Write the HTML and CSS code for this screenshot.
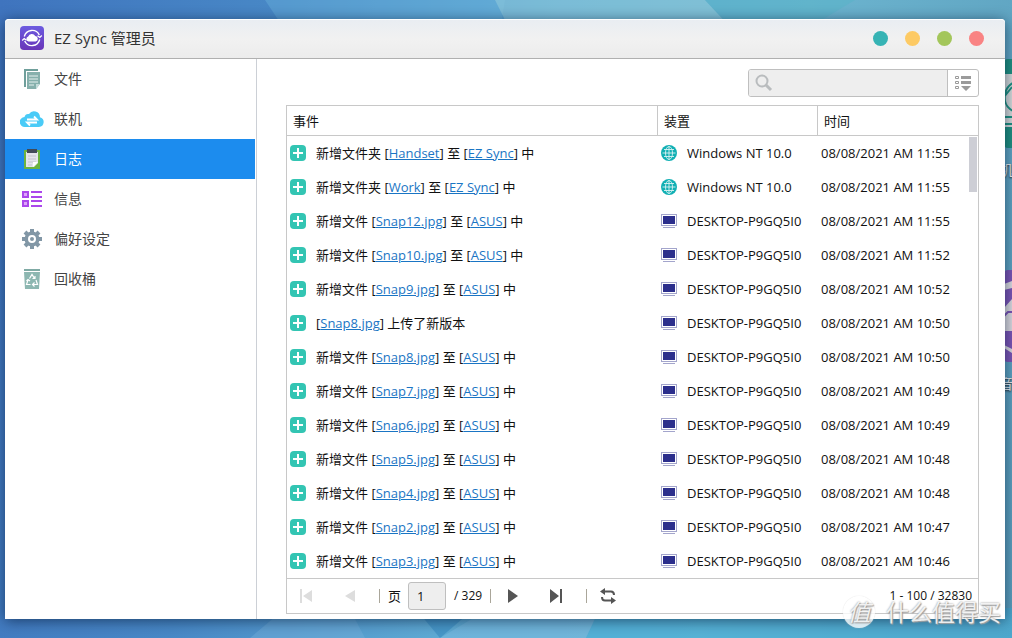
FILE: index.html
```html
<!DOCTYPE html>
<html lang="zh-CN">
<head>
<meta charset="utf-8">
<title>EZ Sync 管理员</title>
<link rel="stylesheet" href="styles.css">
</head>
<body>
<svg class="defs" aria-hidden="true">
  <symbol id="plus" viewBox="0 0 16 16"><rect width="16" height="16" rx="4" fill="#33c5b3"/><path d="M8 3v10M3 8h10" stroke="#fff" stroke-width="2"/></symbol>
  <symbol id="globe" viewBox="0 0 16 16"><circle cx="8" cy="8" r="8" fill="#12b0b4"/><g fill="none" stroke="#fff" stroke-width=".9" opacity=".85"><path d="M8 1.500v13M1.500 8h13M3 4.500h10M3 11.500h10"/><ellipse cx="8" cy="8" rx="3.500" ry="6.500"/></g></symbol>
  <symbol id="pc" viewBox="0 0 16 14"><rect x=".5" y=".5" width="15" height="11" fill="#fff" stroke="#a3a5cc"/><rect x="2" y="2" width="12" height="8" fill="#2c2f8c"/><path d="M2 13.500h12" stroke="#a3a5cc"/></symbol>
</svg>
<div class="desktop">
  <svg class="wallpaper" viewBox="0 0 1012 638" preserveAspectRatio="none" aria-hidden="true">
    <path d="M265 0h240l-5 30H285z" fill="#6cb4dc" opacity=".4"/>
    <path d="M495 0h210l28 30H510z" fill="#a5d6dd" opacity=".4"/>
    <path d="M705 0h150l-50 30h-72z" fill="#55b4c8" opacity=".5"/>
    <path d="M250 638l45-38h50l20 38z" fill="#77b1dc" opacity=".4"/>
    <path d="M415 608h60l-35 30z" fill="#2f84bb" opacity=".5"/>
    <path d="M440 638l50-30h110l-14 30z" fill="#7bbbe2" opacity=".5"/>
    <path d="M600 608h412v30H586z" fill="#3fb0dc" opacity=".5"/>
  </svg>
  <div class="shortcut shortcut-teal" aria-hidden="true">
    <svg class="tile" viewBox="0 0 88 89"><rect width="88" height="89" rx="4" fill="#1f9180"/><path d="M0 15h88v53H0z" fill="#d5dad9"/><path d="M14 22C-2 26-2 44 6 50s10 3 14 2M0 38l8-10M0 58h88M0 65h88" fill="none" stroke="#1f9180" stroke-width="2"/></svg>
    <span>机</span>
  </div>
  <div class="shortcut shortcut-purple" aria-hidden="true">
    <svg class="tile" viewBox="0 0 88 92"><rect width="88" height="92" rx="4" fill="#7c55b5"/><path d="M0 14l8-3v7l-8 2zM0 38l8-9v32H0zM0 75l8 4v4l-8-5z" fill="#dcdadf"/><path d="M0 46l4-4h4" fill="none" stroke="#7c55b5" stroke-width="2"/></svg>
    <span>音</span>
  </div>

  <main class="window">
    <header class="titlebar">
      <svg class="logo" viewBox="0 0 24 24" aria-hidden="true"><defs><linearGradient id="lg" x2="0" y2="1"><stop stop-color="#6b5be0"/><stop offset="1" stop-color="#6a35b8"/></linearGradient></defs><rect width="24" height="24" rx="4" fill="url(#lg)"/><g fill="none" stroke="#fff" stroke-width="1.400"><path d="M4.300 10.500a8 8 0 0 1 15-1.500M19.700 13.500a8 8 0 0 1-15 1.500"/><path d="M21.800 9.500l-2 2-2.300-1.800M2.200 14.500l2-2 2.300 1.800" stroke-width="1.200"/></g><path d="M8.500 15.500a2.500 2.500 0 0 1-.3-4.900 3.800 3.800 0 0 1 7-.6 2.800 2.800 0 0 1 .5 5.500z" fill="#fff"/></svg>
      <h1>EZ Sync 管理员</h1>
      <div class="controls">
        <button class="dot teal" aria-label="帮助"></button>
        <button class="dot amber" aria-label="最小化"></button>
        <button class="dot green" aria-label="最大化"></button>
        <button class="dot red" aria-label="关闭"></button>
      </div>
    </header>
    <div class="body">
      <nav class="sidebar">
        <a href="#files"><svg viewBox="0 0 24 24"><path d="M4 2h14v2H6v16H4z" fill="#6f9f9b"/><path d="M7 5h13v12l-4 5H7z" fill="#86b0ac"/><path d="M9 9h9M9 12h9M9 15h9M9 18h5" stroke="#e6f1ef"/><path d="M20 17l-4 5v-5z" fill="#c4dcd9"/></svg>文件</a>
        <a href="#connect"><svg viewBox="0 0 24 24"><path d="M5 20a5 5 0 0 1-.5-10A4 4 0 0 1 9 7a6 6 0 0 1 11 3.200A5 5 0 0 1 19 20z" fill="#4acbf7"/><path d="M7 12.500h10l-3-3M17 15.500H7l3 3" fill="none" stroke="#fff" stroke-width="1.800"/></svg>联机</a>
        <a href="#log" class="active" aria-current="page"><svg viewBox="0 0 24 24"><path d="M4 3h16v19H4z" fill="#6cb33f"/><path d="M6 5h12v11l-4 4H6z" fill="#e3e4ea"/><path d="M8 9h8M8 12h8M8 15h8M8 18h4" stroke="#c2c5cc"/><path d="M18 15l-5 5v-5z" fill="#fff"/><path d="M7 2h10v4H7z" fill="#414a57"/></svg>日志</a>
        <a href="#info"><svg viewBox="0 0 24 24"><g fill="#dca5f8" stroke="#ab47ec" stroke-width="2"><path d="M3 5h5v5H3zM3 14h5v5H3z"/></g><path d="M11 5h11M11 10h11M11 14h11M11 19h11" stroke="#ab47ec" stroke-width="2"/></svg>信息</a>
        <a href="#preferences"><svg viewBox="0 0 24 24"><g stroke="#8297a6" stroke-width="4"><path d="M12 2v20M2 12h20M5 5l14 14M19 5L5 19"/></g><circle cx="12" cy="12" r="7.500" fill="#8297a6"/><circle cx="12" cy="12" r="3" fill="#8297a6" stroke="#fff" stroke-width="2"/></svg>偏好设定</a>
        <a href="#recycle"><svg viewBox="0 0 24 24"><path d="M4 2h16v2H4z" fill="#7faaa4"/><path d="M4 5h16l-1 17H5z" fill="#8db7b1"/><path d="M9.500 11.500l2.500-4 2.500 4M16 13l1.500 4.500H13M10.500 17.500h-4L8 13M12.500 11.500h2.500v-2.500M14.500 15.500l-2 2 2 2M6.500 14l1.500-1.500 2 1.500" fill="none" stroke="#fff" stroke-width="1.200"/></svg>回收桶</a>
      </nav>
      <section class="content">
        <div class="search">
          <label for="q"><svg viewBox="0 0 18 18"><circle cx="7" cy="7" r="5.500" fill="none" stroke="#b9bcbe" stroke-width="2"/><path d="M11 11l5 5" stroke="#b9bcbe" stroke-width="3"/></svg></label>
          <input id="q" type="search" aria-label="搜索">
          <button aria-label="筛选"><svg viewBox="0 0 16 16"><path d="M.5 1.500h3v2h-3zM.5 6.500h3v2h-3zM.5 11.500h3v2h-3z" fill="none" stroke="#9b9b9b"/><path d="M6 1h10v3H6zM6 6h10v3H6zM6 11h10l-5 5z" fill="#9b9b9b"/></svg></button>
        </div>
        <div class="grid">
          <div class="scroll">
            <table>
              <colgroup><col><col class="c-device"><col class="c-time"></colgroup>
              <thead><tr><th scope="col">事件</th><th scope="col">装置</th><th scope="col">时间</th></tr></thead>
              <tbody id="rows"></tbody>
            </table>
            <div class="thumb"></div>
          </div>
          <footer class="pager">
            <button class="first" disabled aria-label="第一页"><svg viewBox="0 0 14 16"><path d="M1 1h2v14H1zM13 2v12L4 8z"/></svg></button>
            <button class="prev" disabled aria-label="上一页"><svg viewBox="0 0 14 16"><path d="M12 2v12L2 8z"/></svg></button>
            <span class="sep"></span>
            <label for="page">页</label>
            <input id="page" type="text" value="1">
            <span class="total">/ 329</span>
            <span class="sep"></span>
            <button class="next" aria-label="下一页"><svg viewBox="0 0 14 16"><path d="M2 1v14l10-7z"/></svg></button>
            <button class="last" aria-label="最后一页"><svg viewBox="0 0 14 16"><path d="M1 1v14l9-7zM11 1h2v14h-2z"/></svg></button>
            <span class="sep"></span>
            <button class="refresh" aria-label="刷新"><svg viewBox="0 0 16 16"><path d="M5 0v7L0 3.500zM11 9v7l5-3.500z"/><path d="M4 3.500h7q3 0 3 3.500M12 12.500H5q-3 0-3-3.500" fill="none" stroke="#555" stroke-width="2"/></svg></button>
            <span class="range">1 - 100 / 32830</span>
          </footer>
        </div>
      </section>
    </div>
  </main>
  <div class="watermark"><span class="seal">值</span><span>什么值得买</span></div>
</div>
<script src="app.js"></script>
</body>
</html>
```
FILE: styles.css
```css
* { box-sizing: border-box; }
body {
  margin: 0;
  font: 13px/18px "Open Sans", "Noto Sans CJK SC", sans-serif;
  color: #111;
}
h1 { margin: 0; font-size: 15px; font-weight: 400; color: #333; }
button, input { font: inherit; color: inherit; margin: 0; }
button { padding: 0; border: 0; background: none; }
svg { display: block; flex: none; }
.defs { position: absolute; width: 0; height: 0; }

.desktop {
  position: relative;
  min-height: 100vh;
  padding: 19px 7px 19px 5px;
  display: flex;
  overflow: hidden;
  background: linear-gradient(100deg, #3f74be 0%, #4888c6 25%, #5fabd4 50%, #6cb4cf 72%, #5b9fbd 100%);
}
.wallpaper { position: absolute; inset: 0; width: 100%; height: 100%; }
.shortcut { position: absolute; left: calc(100% - 8px); width: 88px; font-size: 14px; color: #e6eef2; text-shadow: 0 1px 2px #222; }
.shortcut-teal { top: 59px; }
.shortcut-purple { top: 270px; }
.shortcut span { display: block; margin-top: 13px; margin-left: -5px; }

.window {
  position: relative;
  flex: 1;
  display: flex;
  flex-direction: column;
  background: #fff;
  border-radius: 4px 4px 0 0;
  box-shadow: 0 2px 14px rgba(0, 20, 50, .6);
}
.titlebar {
  display: flex;
  align-items: center;
  height: 40px;
  padding: 0 21px 2px 15px;
  gap: 10px;
  border-top: 1px solid #fff;
  border-bottom: 1px solid #b0b0b0;
  border-radius: 4px 4px 0 0;
  background: linear-gradient(#e9edf2, #f1f1f1 50%, #ececec);
}
.logo { width: 24px; height: 24px; }
.controls { display: flex; gap: 17px; margin-left: auto; }
.dot { width: 15px; height: 15px; border-radius: 50%; }
.teal { background: #36b3b4; }
.amber { background: #fdca64; }
.green { background: #a3c65b; }
.red { background: #f98383; }

.body { flex: 1; display: flex; }
.sidebar { flex: none; width: 252px; padding-right: 1px; border-right: 1px solid #ccd0d6; }
.sidebar a {
  display: flex;
  align-items: center;
  gap: 10px;
  height: 40px;
  padding-left: 15px;
  font-size: 14px;
  color: #444;
  text-decoration: none;
}
.sidebar svg { width: 24px; height: 24px; }
.sidebar .active { background: #1c8cee; color: #fff; }

.content { flex: 1; min-width: 0; padding: 10px 26px 5px 29px; display: flex; flex-direction: column; gap: 8px; }
.search {
  display: flex;
  align-self: flex-end;
  width: 231px;
  height: 28px;
  border: 1px solid #bfbfbf;
  border-radius: 3px;
  overflow: hidden;
}
.search label { display: flex; align-items: center; padding-left: 6px; background: #eee; }
.search label svg { width: 18px; height: 18px; }
.search input { flex: 1; min-width: 0; border: 0; background: #eee; outline: 0; }
.search button { width: 31px; border-left: 1px solid #bfbfbf; display: grid; place-items: center; }
.search button svg { width: 16px; height: 16px; }

.grid { flex: 1; display: flex; flex-direction: column; border: 1px solid #c8c8c8; }
.scroll { position: relative; flex: 1; }
.thumb { position: absolute; top: 31px; right: 1px; width: 8px; height: 55px; background: #cdced5; }
table { width: 100%; table-layout: fixed; border-collapse: separate; border-spacing: 0; }
.c-device { width: 160px; }
.c-time { width: 161px; }
th { height: 30px; padding: 0 6px; font-weight: 400; text-align: left; border-bottom: 1px solid #c8c8c8; }
th + th { border-left: 1px solid #c8c8c8; }
td { height: 34px; padding: 0 4px; white-space: nowrap; }
td:first-child { padding-left: 3px; }
.cell { display: flex; align-items: center; gap: 10px; }
.cell svg { width: 16px; height: 16px; }
.cell .pc { height: 14px; }
td a { color: #1a75c4; text-decoration: underline; }

.pager { display: flex; align-items: center; height: 35px; padding: 0 6px 0 12px; border-top: 1px solid #c8c8c8; }
.pager button svg { width: 14px; height: 16px; fill: #555; }
.pager button:disabled svg { fill: #ddd; }
.pager .prev { margin-left: 30px; }
.pager .sep { width: 1px; height: 14px; background: #aaa69a; }
.prev + .sep { margin-left: 22px; }
.pager label { margin-left: 8px; }
.pager input { width: 38px; height: 28px; margin: 0 8px 0 7px; padding: 0 8px; border: 1px solid #bfbfbf; border-radius: 3px; background: #eee; }
.total, .range { font-size: 12px; }
.total + .sep { margin-left: 8px; }
.pager .next { margin-left: 15px; }
.pager .last { margin-left: 29px; }
.last + .sep { margin-left: 23px; }
.pager .refresh { margin-left: 13px; }
.pager .refresh svg { width: 16px; }
.range { margin-left: auto; }

.watermark {
  position: absolute;
  right: 11px;
  bottom: 10px;
  display: flex;
  align-items: center;
  gap: 11px;
  font-size: 23px;
  line-height: 24px;
  color: rgba(255, 255, 255, .85);
  text-shadow: 0 0 2px #888, 1px 1px 1px #aaa;
}
.seal { display: grid; place-items: center; width: 32px; height: 32px; font-style: italic; border-radius: 50%; background: rgba(255, 255, 255, .8); box-shadow: 0 0 1px #ccc; }
```
FILE: app.js
```js
const PC = "DESKTOP-P9GQ5I0";
const NT = "Windows NT 10.0";
const events = [
  ["新增文件夹", "Handset", "EZ Sync", NT, "11:55"],
  ["新增文件夹", "Work", "EZ Sync", NT, "11:55"],
  ["新增文件", "Snap12.jpg", "ASUS", PC, "11:55"],
  ["新增文件", "Snap10.jpg", "ASUS", PC, "11:52"],
  ["新增文件", "Snap9.jpg", "ASUS", PC, "10:52"],
  ["", "Snap8.jpg", "", PC, "10:50"],
  ["新增文件", "Snap8.jpg", "ASUS", PC, "10:50"],
  ["新增文件", "Snap7.jpg", "ASUS", PC, "10:49"],
  ["新增文件", "Snap6.jpg", "ASUS", PC, "10:49"],
  ["新增文件", "Snap5.jpg", "ASUS", PC, "10:48"],
  ["新增文件", "Snap4.jpg", "ASUS", PC, "10:48"],
  ["新增文件", "Snap2.jpg", "ASUS", PC, "10:47"],
  ["新增文件", "Snap3.jpg", "ASUS", PC, "10:46"]
];
const link = (name) => `[<a href="#item">${name}</a>]`;
document.getElementById("rows").innerHTML = events.map(([action, name, target, device, time]) => {
  const text = action ? `${action} ${link(name)} 至 ${link(target)} 中` : `${link(name)} 上传了新版本`;
  const icon = device === PC ? "pc" : "globe";
  return `<tr><td><div class="cell"><svg><use href="#plus"/></svg><span>${text}</span></div></td>
    <td><div class="cell"><svg class="${icon}"><use href="#${icon}"/></svg><span>${device}</span></div></td>
    <td>08/08/2021 AM ${time}</td></tr>`;
}).join("");
```
